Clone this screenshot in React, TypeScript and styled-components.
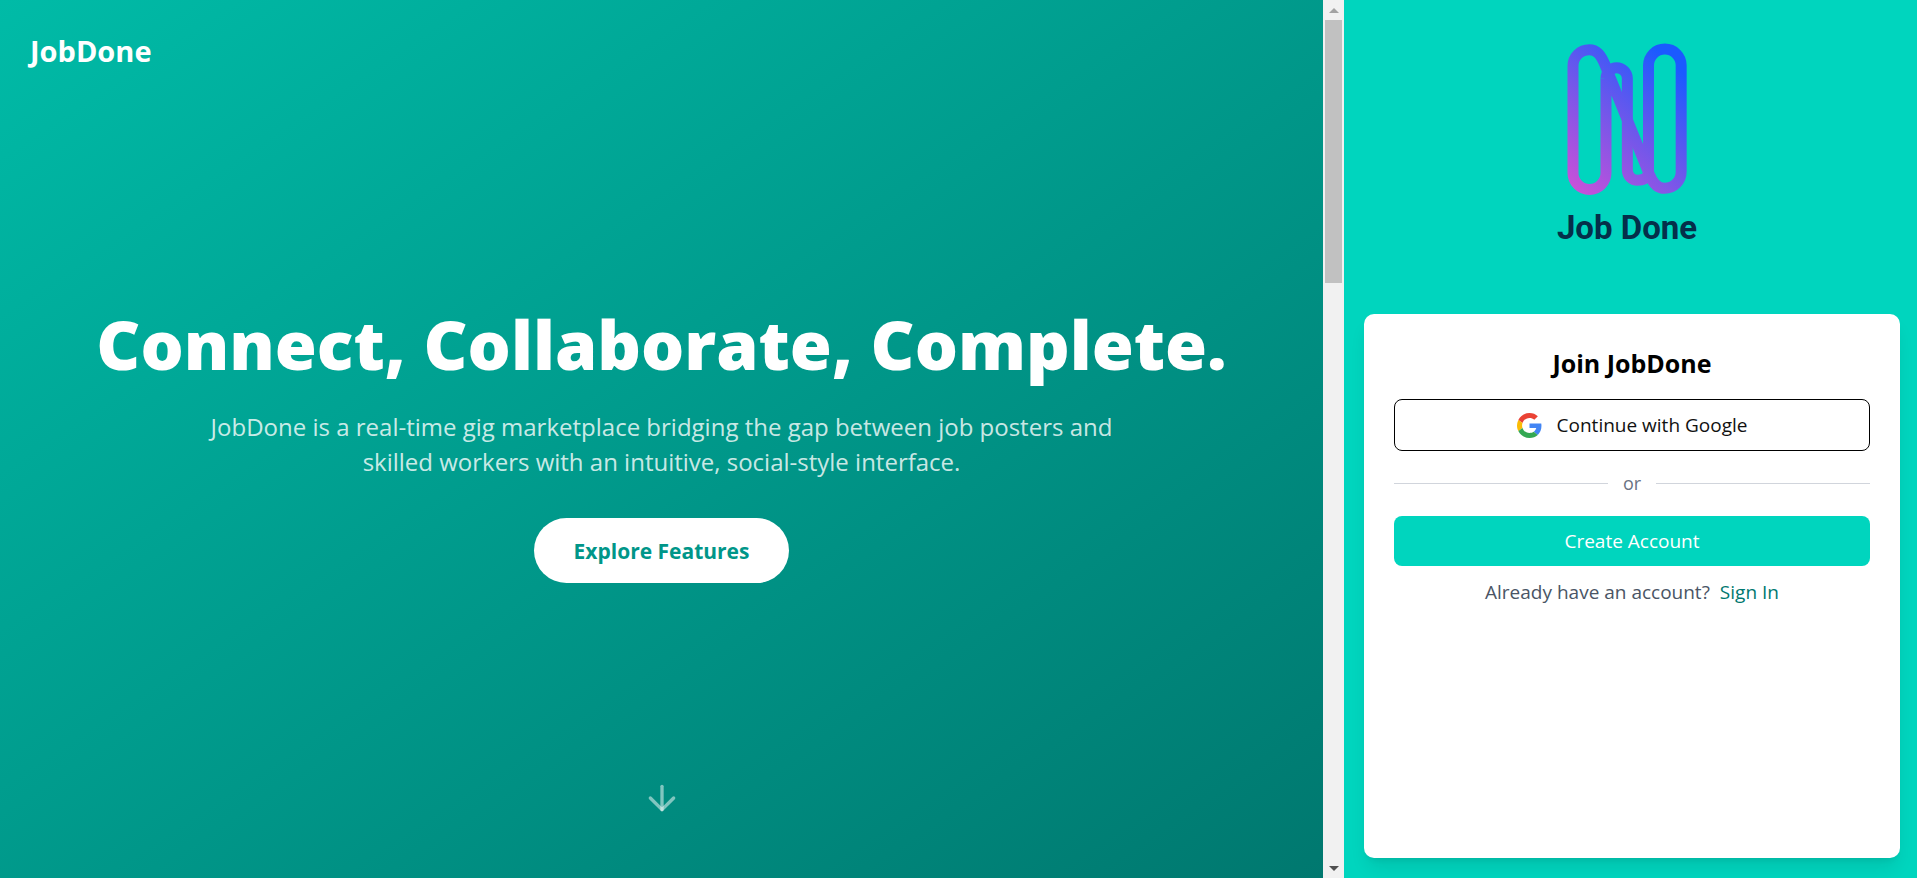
import React from 'react';
import styled, { createGlobalStyle } from 'styled-components';
import { ArrowDown } from 'lucide-react';

const GlobalStyle = createGlobalStyle`
  *, *::before, *::after { box-sizing: border-box; }
  body { margin: 0; font-family: "Open Sans", "Noto Sans", sans-serif; }
  h1, h2, p { margin: 0; }
  button { font-family: inherit; cursor: pointer; }
`;

const Page = styled.div`
  display: grid;
  grid-template-columns: minmax(0, 1344fr) minmax(0, 573fr);
  min-height: 100vh;
`;

const HeroPane = styled.div`
  display: flex;
`;

const Hero = styled.section`
  flex: 1;
  min-width: 0;
  display: flex;
  flex-direction: column;
  color: #fff;
  background: linear-gradient(to bottom right, #00bba7, #00786f);
`;

const HeroHeader = styled.header`
  padding: 31px 30px 39px;
  font-size: 29px;
  line-height: 40px;
  font-weight: 700;
`;

const HeroMain = styled.main`
  flex: 1;
  display: flex;
  flex-direction: column;
  align-items: center;
  justify-content: center;
  padding: 0 20px;
  text-align: center;
`;

const Headline = styled.h1`
  font-size: 68px;
  line-height: 78px;
  font-weight: 800;
`;

const Lead = styled.p`
  max-width: 960px;
  margin-top: 26px;
  font-size: 24px;
  line-height: 35px;
  color: rgba(255, 255, 255, 0.8);
`;

const ExploreButton = styled.button`
  height: 65px;
  margin-top: 39px;
  padding: 0 40px;
  border: 0;
  border-radius: 33px;
  background: #fff;
  color: #009689;
  font-size: 21px;
  font-weight: 700;
`;

const HeroFooter = styled.footer`
  display: flex;
  justify-content: center;
  padding-bottom: 60px;
`;

const ScrollTrack = styled.div`
  flex: none;
  width: 21px;
  display: flex;
  flex-direction: column;
  align-items: center;
  background: #f1f1f1;
`;

const ScrollArrow = styled.div<{ $down?: boolean }>`
  height: 20px;
  display: flex;
  align-items: center;
  margin-top: ${(p) => (p.$down ? 'auto' : '0')};
  &::before {
    content: '';
    border: 5px solid transparent;
    border-width: ${(p) => (p.$down ? '5px 5px 0' : '0 5px 5px')};
    border-color: ${(p) => (p.$down ? '#505050 transparent' : 'transparent transparent #a3a3a3')};
  }
`;

const ScrollThumb = styled.div`
  width: 17px;
  height: 30vh;
  background: #c1c1c1;
`;

const AuthPane = styled.aside`
  display: flex;
  flex-direction: column;
  padding: 20px 17px 20px 20px;
  background: #00d5be;
`;

const Brand = styled.div`
  display: flex;
  flex-direction: column;
  align-items: center;
  padding: 23px 10px 66px 0;
`;

const BrandName = styled.div`
  margin-top: 13px;
  font-family: Roboto, sans-serif;
  font-size: 33px;
  line-height: 40px;
  font-weight: 700;
  color: #052f4a;
`;

const Card = styled.section`
  flex: 1;
  padding: 30px;
  border-radius: 10px;
  background: #fff;
  box-shadow: 0 12px 18px -4px rgba(0, 0, 0, 0.1), 0 5px 7px -5px rgba(0, 0, 0, 0.1);
`;

const CardTitle = styled.h2`
  margin-bottom: 17px;
  font-size: 25px;
  line-height: 38px;
  font-weight: 700;
  text-align: center;
  color: #000;
`;

const WideButton = styled.button<{ $primary?: boolean }>`
  display: flex;
  align-items: center;
  justify-content: center;
  gap: 15px;
  width: 100%;
  height: ${(p) => (p.$primary ? 50 : 52)}px;
  border: ${(p) => (p.$primary ? '0' : '1px solid #000')};
  border-radius: 8px;
  background: ${(p) => (p.$primary ? '#00d5be' : '#fff')};
  color: ${(p) => (p.$primary ? '#fff' : '#111')};
  font-size: 19px;
`;

const Divider = styled.div`
  display: flex;
  align-items: center;
  gap: 15px;
  margin: 20px 0;
  font-size: 18px;
  line-height: 25px;
  color: #6a7282;
  &::before, &::after {
    content: '';
    flex: 1;
    height: 1px;
    background: #d1d5dc;
  }
`;

const SignInRow = styled.p`
  display: flex;
  justify-content: center;
  gap: 10px;
  margin-top: 11px;
  font-size: 19px;
  line-height: 30px;
  color: #4a5565;
`;

const SignInLink = styled.a`
  color: #00786f;
  text-decoration: none;
`;

function BrandMark() {
  return (
    <svg width="120" height="152" viewBox="141 69 360 456" fill="none" aria-hidden="true">
      <defs>
        <linearGradient id="mark" gradientUnits="userSpaceOnUse" x1="150" y1="510" x2="480" y2="150">
          <stop offset="0" stopColor="#cc50d8" />
          <stop offset="0.5" stopColor="#7357ea" />
          <stop offset="1" stopColor="#1a5aff" />
        </linearGradient>
      </defs>
      <g stroke="url(#mark)" strokeWidth="33" strokeLinejoin="round">
        <path d="M258 175V459A49.500 49.500 0 0 1 159 459V138A49 49 0 0 1 208 89C230 89 242 104 254 132L388 463C399 491 413 505 434 505A49.500 49.500 0 0 0 483.500 455V136A49 49 0 0 0 385.500 136V460" />
        <path d="M258 175A32 32 0 0 1 322 175V450A31 31 0 0 0 353 481Q376 481 387 462" />
      </g>
    </svg>
  );
}

function GoogleIcon() {
  return (
    <svg width="25" height="25" viewBox="0 0 48 48" aria-hidden="true">
      <path fill="#EA4335" d="M24 9.500c3.540 0 6.710 1.220 9.210 3.600l6.850-6.850C35.900 2.380 30.470 0 24 0 14.620 0 6.510 5.380 2.560 13.220l7.980 6.190C12.430 13.720 17.740 9.500 24 9.500z" />
      <path fill="#4285F4" d="M46.980 24.550c0-1.570-.15-3.090-.38-4.550H24v9.020h12.940c-.58 2.960-2.260 5.480-4.780 7.180l7.730 6c4.510-4.180 7.090-10.360 7.090-17.650z" />
      <path fill="#FBBC05" d="M10.530 28.590c-.48-1.450-.76-2.990-.76-4.590s.27-3.140.76-4.590l-7.980-6.190C.92 16.460 0 20.120 0 24c0 3.880.92 7.540 2.560 10.780l7.970-6.190z" />
      <path fill="#34A853" d="M24 48c6.480 0 11.930-2.130 15.890-5.810l-7.730-6c-2.150 1.450-4.920 2.300-8.160 2.300-6.260 0-11.570-4.220-13.470-9.910l-7.980 6.190C6.510 42.620 14.620 48 24 48z" />
    </svg>
  );
}

export default function App() {
  return (
    <>
      <GlobalStyle />
      <Page>
        <HeroPane>
          <Hero>
            <HeroHeader>JobDone</HeroHeader>
            <HeroMain>
              <Headline>Connect, Collaborate, Complete.</Headline>
              <Lead>
                JobDone is a real-time gig marketplace bridging the gap between job posters and
                skilled workers with an intuitive, social-style interface.
              </Lead>
              <ExploreButton type="button">Explore Features</ExploreButton>
            </HeroMain>
            <HeroFooter>
              <ArrowDown size={40} color="rgba(255, 255, 255, 0.5)" />
            </HeroFooter>
          </Hero>
          <ScrollTrack aria-hidden="true">
            <ScrollArrow />
            <ScrollThumb />
            <ScrollArrow $down />
          </ScrollTrack>
        </HeroPane>
        <AuthPane>
          <Brand>
            <BrandMark />
            <BrandName>Job Done</BrandName>
          </Brand>
          <Card>
            <CardTitle>Join JobDone</CardTitle>
            <WideButton type="button">
              <GoogleIcon />
              Continue with Google
            </WideButton>
            <Divider>or</Divider>
            <WideButton type="button" $primary>
              Create Account
            </WideButton>
            <SignInRow>
              Already have an account?
              <SignInLink href="#sign-in">Sign In</SignInLink>
            </SignInRow>
          </Card>
        </AuthPane>
      </Page>
    </>
  );
}
